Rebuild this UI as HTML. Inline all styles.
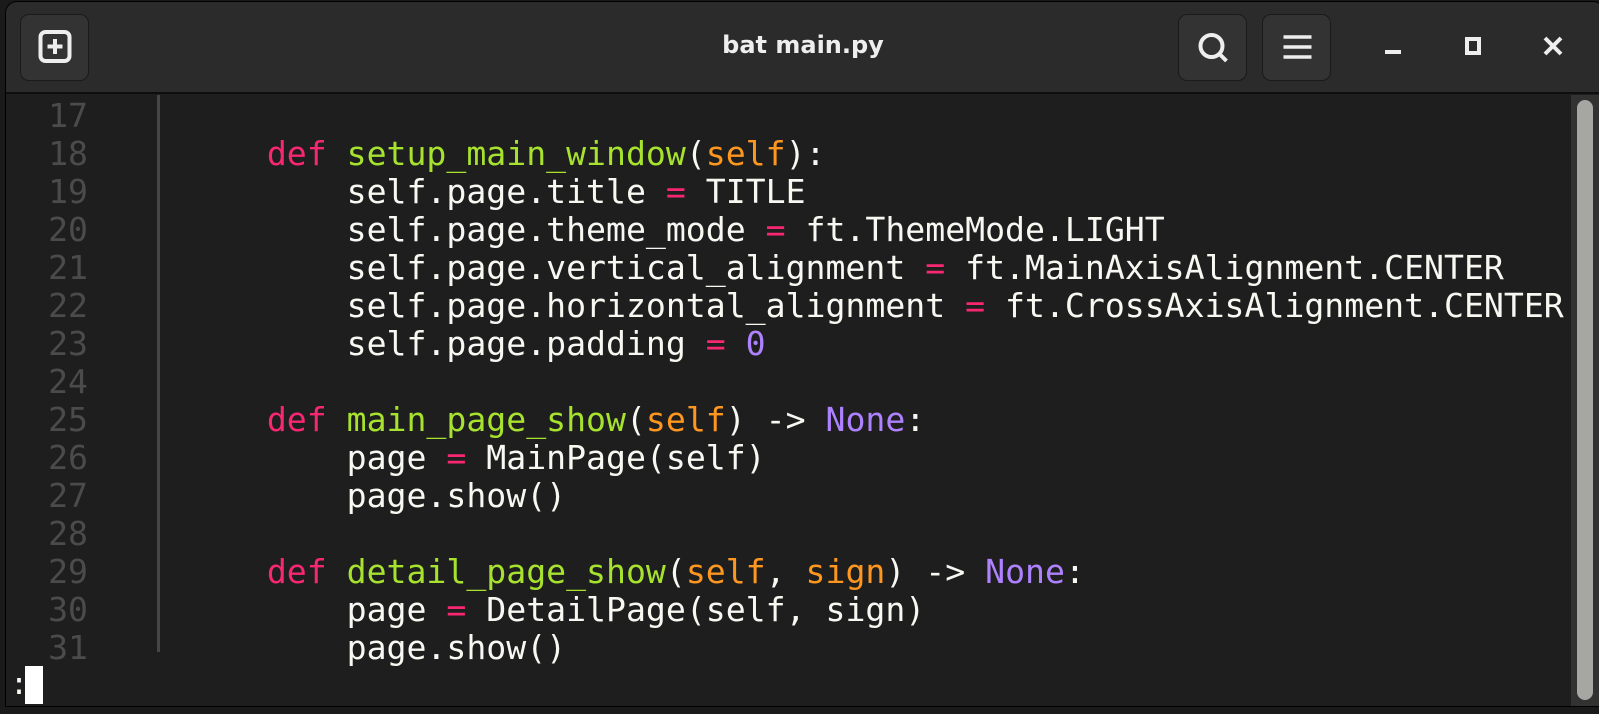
<!DOCTYPE html>
<html><head><meta charset="utf-8"><style>
*{margin:0;padding:0;box-sizing:border-box}
body{width:1599px;height:714px;background:#1a1a1a;position:relative;overflow:hidden;font-family:"DejaVu Sans Mono","Liberation Mono",monospace}
.win{position:absolute;left:5px;top:1px;width:1600px;height:706px;background:#1e1e1e;border:1px solid #000;border-radius:12px 12px 0 0;overflow:hidden}
.hdr{position:absolute;left:0;top:0;right:0;height:92px;background:#2b2b2b;border-bottom:2px solid #0e0e0e}
.btn{position:absolute;top:12px;width:69px;height:67px;background:#333;border:1px solid #1a1a1a;border-radius:9px}
.title{position:absolute;left:0;width:1594px;top:29px;text-align:center;color:#eee;font:bold 24px "DejaVu Sans","Liberation Sans",sans-serif}
.ln{position:absolute;left:0;width:82px;text-align:right;color:#4b4b4b;font-size:33.15px;white-space:pre}
.code{position:absolute;left:181px;color:#f8f8f2;font-size:33.15px;white-space:pre}
.ln div,.code div{height:38px;line-height:38px}
.k{color:#f92672}.f{color:#a6e22e}.s{color:#fd971f}.n{color:#ae81ff}
</style></head><body>
<div class="win">
<div class="hdr">
<div class="btn" style="left:14px"><svg width="69" height="67" viewBox="0 0 68 67"><rect x="19" y="17" width="29" height="29" rx="5" fill="none" stroke="#eee" stroke-width="4"/><path d="M33.5 24v15M26 31.5h15" stroke="#eee" stroke-width="4"/></svg></div>
<div class="title">bat main.py</div>
<div class="btn" style="left:1172px"><svg width="69" height="67" viewBox="0 0 68 67"><circle cx="32" cy="31" r="11" fill="none" stroke="#eee" stroke-width="4"/><path d="M40 39l7 7" stroke="#eee" stroke-width="4"/></svg></div>
<div class="btn" style="left:1256px"><svg width="69" height="67" viewBox="0 0 68 67"><path d="M20 22h28M20 32h28M20 42h28" stroke="#eee" stroke-width="3.5"/></svg></div>
<svg style="position:absolute;left:0;top:0" width="1600" height="92"><path d="M1379 50h16" stroke="#eee" stroke-width="4"/><rect x="1461" y="37" width="12" height="14" fill="none" stroke="#eee" stroke-width="4"/><path d="M1539 36l16 16M1555 36l-16 16" stroke="#eee" stroke-width="4"/></svg>
</div>
<div style="position:absolute;left:151px;top:93px;width:3px;height:557px;background:#464646"></div>
<div style="position:absolute;left:1565px;top:93px;width:30px;height:613px;background:#323232"></div>
<div style="position:absolute;left:1571px;top:98px;width:16px;height:600px;background:#a6a6a2;border-radius:8px"></div>
<div class="ln" style="top:95px"><div>17</div><div>18</div><div>19</div><div>20</div><div>21</div><div>22</div><div>23</div><div>24</div><div>25</div><div>26</div><div>27</div><div>28</div><div>29</div><div>30</div><div>31</div></div>
<div class="code" style="top:95px"><div> </div><div>    <span class="k">def</span> <span class="f">setup_main_window</span>(<span class="s">self</span>):</div><div>        self.page.title <span class="k">=</span> TITLE</div><div>        self.page.theme_mode <span class="k">=</span> ft.ThemeMode.LIGHT</div><div>        self.page.vertical_alignment <span class="k">=</span> ft.MainAxisAlignment.CENTER</div><div>        self.page.horizontal_alignment <span class="k">=</span> ft.CrossAxisAlignment.CENTER</div><div>        self.page.padding <span class="k">=</span> <span class="n">0</span></div><div> </div><div>    <span class="k">def</span> <span class="f">main_page_show</span>(<span class="s">self</span>) -&gt; <span class="n">None</span>:</div><div>        page <span class="k">=</span> MainPage(self)</div><div>        page.show()</div><div> </div><div>    <span class="k">def</span> <span class="f">detail_page_show</span>(<span class="s">self</span>, <span class="s">sign</span>) -&gt; <span class="n">None</span>:</div><div>        page <span class="k">=</span> DetailPage(self, sign)</div><div>        page.show()</div></div>
<div style="position:absolute;left:4px;top:664px;color:#f8f8f2;font-size:30px;line-height:37px">:</div>
<div style="position:absolute;left:19px;top:664px;width:18px;height:38px;background:#fff"></div>
</div>
</body></html>
